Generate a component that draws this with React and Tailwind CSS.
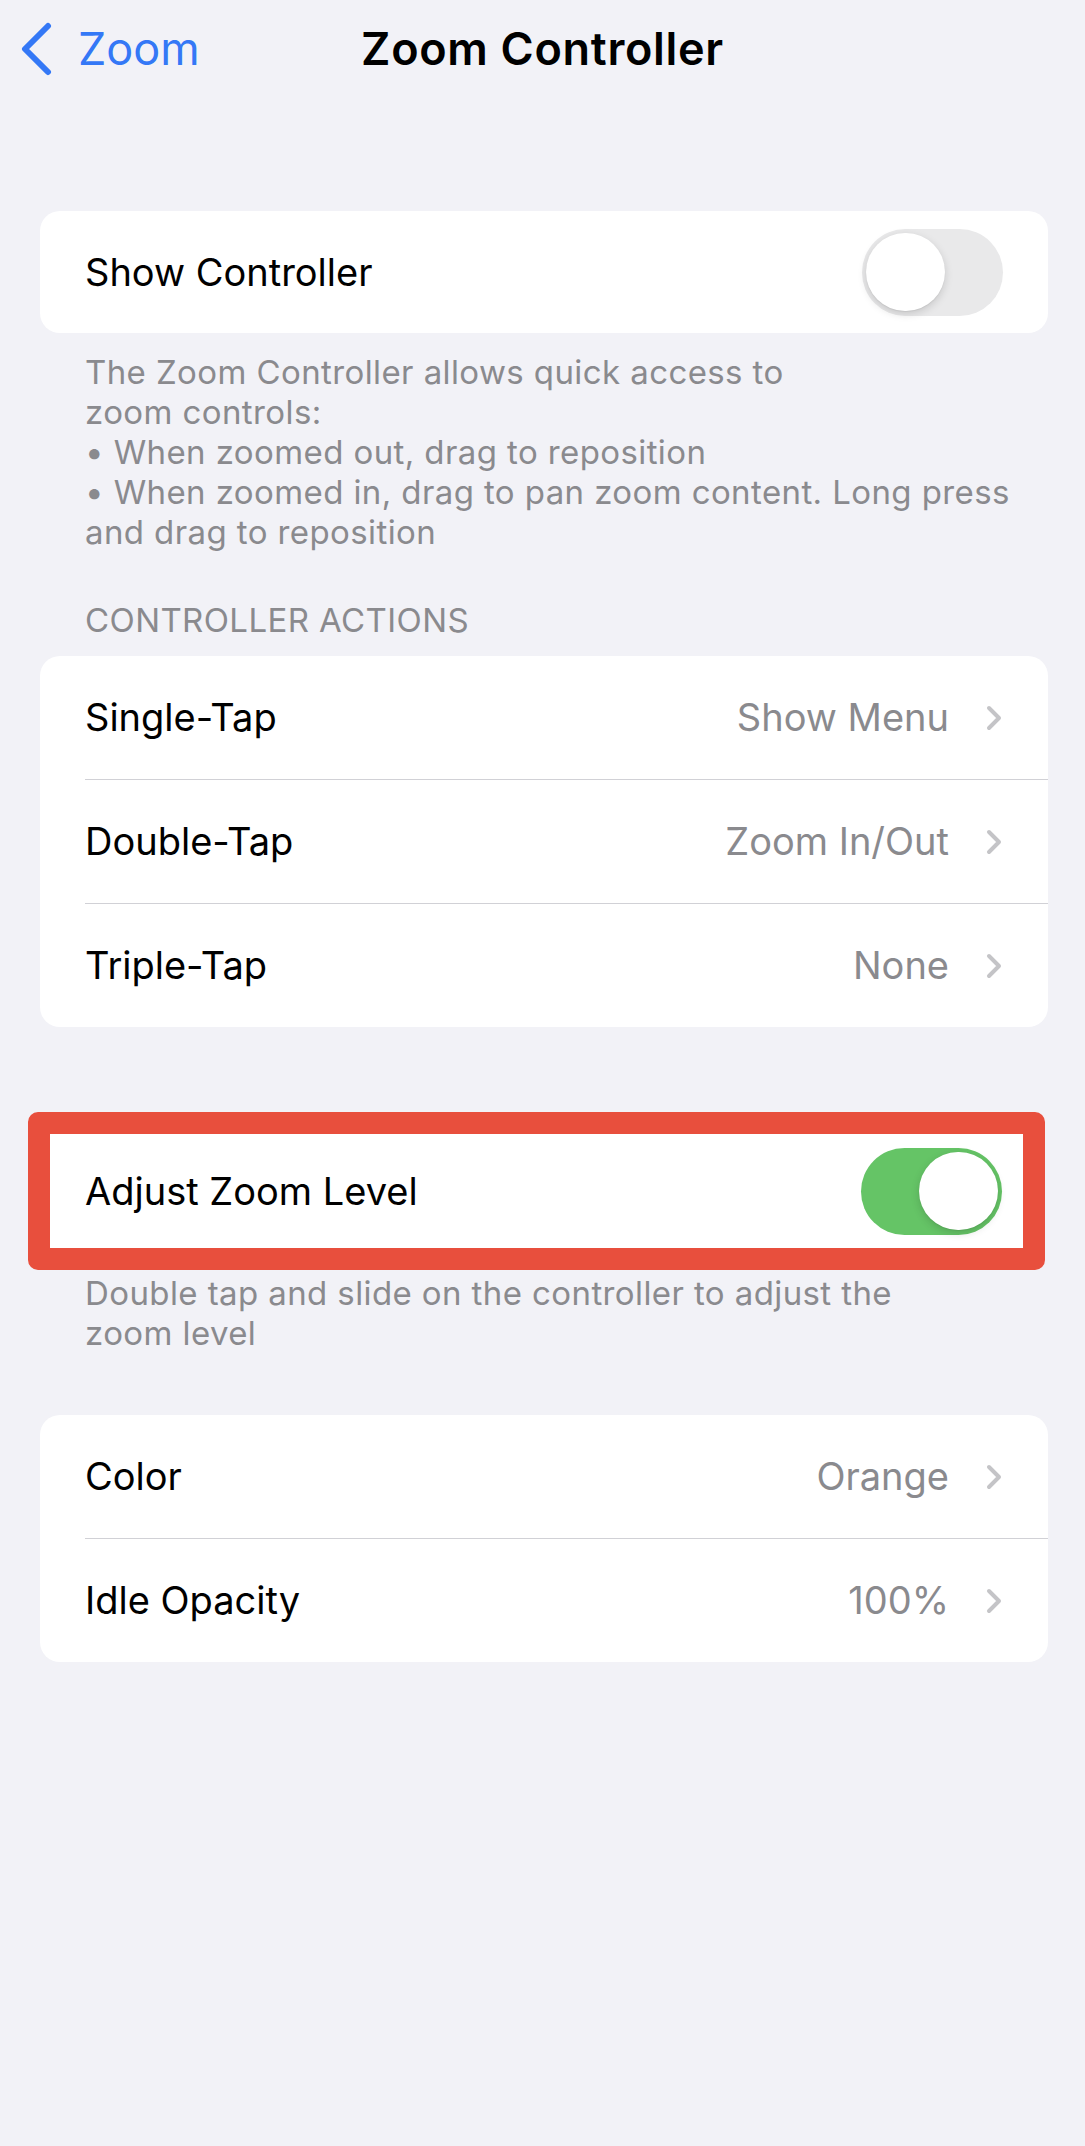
import React from "react";

const Chevron = () => (
  <svg className="ml-[36px] w-[18px] h-[28px] shrink-0" viewBox="0 0 18 28" fill="none">
    <path d="M4 4 L14 14 L4 24" stroke="#c4c4c7" strokeWidth="4" strokeLinecap="round" strokeLinejoin="round" />
  </svg>
);

const Toggle = ({ on }) => (
  <div
    className={
      on
        ? "w-[141px] h-[87px] rounded-full bg-[#65c466] flex items-center justify-end pr-[4px] shrink-0"
        : "w-[141px] h-[87px] rounded-full bg-[#e9e9ea] flex items-center justify-start pl-[4px] shrink-0"
    }
  >
    <div className="w-[79px] h-[78px] rounded-full bg-white shadow-[0_3px_8px_rgba(0,0,0,0.15),0_1px_1px_rgba(0,0,0,0.06)]" />
  </div>
);

const LinkRow = ({ label, value }) => (
  <div className="h-[123px] px-[45px] flex items-center">
    <span className="flex-1 text-[38px] text-black">{label}</span>
    <span className="text-[38px] text-[#8a8a8e]">{value}</span>
    <Chevron />
  </div>
);

const Divider = () => <div className="ml-[45px] h-px bg-[#d1d1d6]" />;

const Footer = ({ lines, className }) => (
  <div className={"pl-[85px] text-[33px] tracking-[0.4px] leading-[40px] text-[#8a8a8e] " + className}>
    {lines.map((line) => (
      <div key={line} className="whitespace-nowrap">
        {line}
      </div>
    ))}
  </div>
);

const App = () => {
  return (
    <div className="w-[1085px] min-h-[2146px] bg-[#f2f2f7] font-['Inter','Liberation_Sans',sans-serif] antialiased">
      {/* nav bar */}
      <div className="h-[98px] grid grid-cols-[1fr_auto_1fr] items-center">
        <div className="flex items-center pl-[20px]">
          <svg className="w-[34px] h-[54px]" viewBox="0 0 34 54" fill="none">
            <path d="M28 4 L5 27 L28 50" stroke="#3478f6" strokeWidth="6" strokeLinecap="round" strokeLinejoin="round" />
          </svg>
          <span className="ml-[24px] text-[45px] text-[#3478f6]">Zoom</span>
        </div>
        <h1 className="text-[45px] tracking-[0.7px] font-semibold text-black">Zoom Controller</h1>
        <div />
      </div>

      {/* show controller */}
      <div className="mt-[113px] ml-[40px] mr-[37px] bg-white rounded-[20px] h-[122px] px-[45px] flex items-center">
        <span className="flex-1 text-[38px] text-black">Show Controller</span>
        <Toggle on={false} />
      </div>
      <Footer
        className="pt-[19px]"
        lines={[
          "The Zoom Controller allows quick access to",
          "zoom controls:",
          "• When zoomed out, drag to reposition",
          "• When zoomed in, drag to pan zoom content. Long press",
          "and drag to reposition",
        ]}
      />

      {/* controller actions */}
      <div className="mt-[48px] pl-[85px] text-[33px] tracking-[0.4px] leading-[40px] text-[#8a8a8e] uppercase">
        Controller Actions
      </div>
      <div className="mt-[16px] ml-[40px] mr-[37px] bg-white rounded-[20px] overflow-hidden">
        <LinkRow label="Single-Tap" value="Show Menu" />
        <Divider />
        <LinkRow label="Double-Tap" value="Zoom In/Out" />
        <Divider />
        <LinkRow label="Triple-Tap" value="None" />
      </div>

      {/* adjust zoom level, highlighted */}
      <div className="mt-[85px] ml-[28px] w-[1017px] border-[22px] border-[#e84f3d] rounded-[10px]">
        <div className="h-[114px] bg-white pl-[35px] pr-[21px] flex items-center">
          <span className="flex-1 text-[38px] text-black">Adjust Zoom Level</span>
          <Toggle on />
        </div>
      </div>
      <Footer
        className="pt-[3px]"
        lines={["Double tap and slide on the controller to adjust the", "zoom level"]}
      />

      {/* appearance */}
      <div className="mt-[62px] ml-[40px] mr-[37px] bg-white rounded-[20px] overflow-hidden">
        <LinkRow label="Color" value="Orange" />
        <Divider />
        <LinkRow label="Idle Opacity" value="100%" />
      </div>
    </div>
  );
};

export default App;
